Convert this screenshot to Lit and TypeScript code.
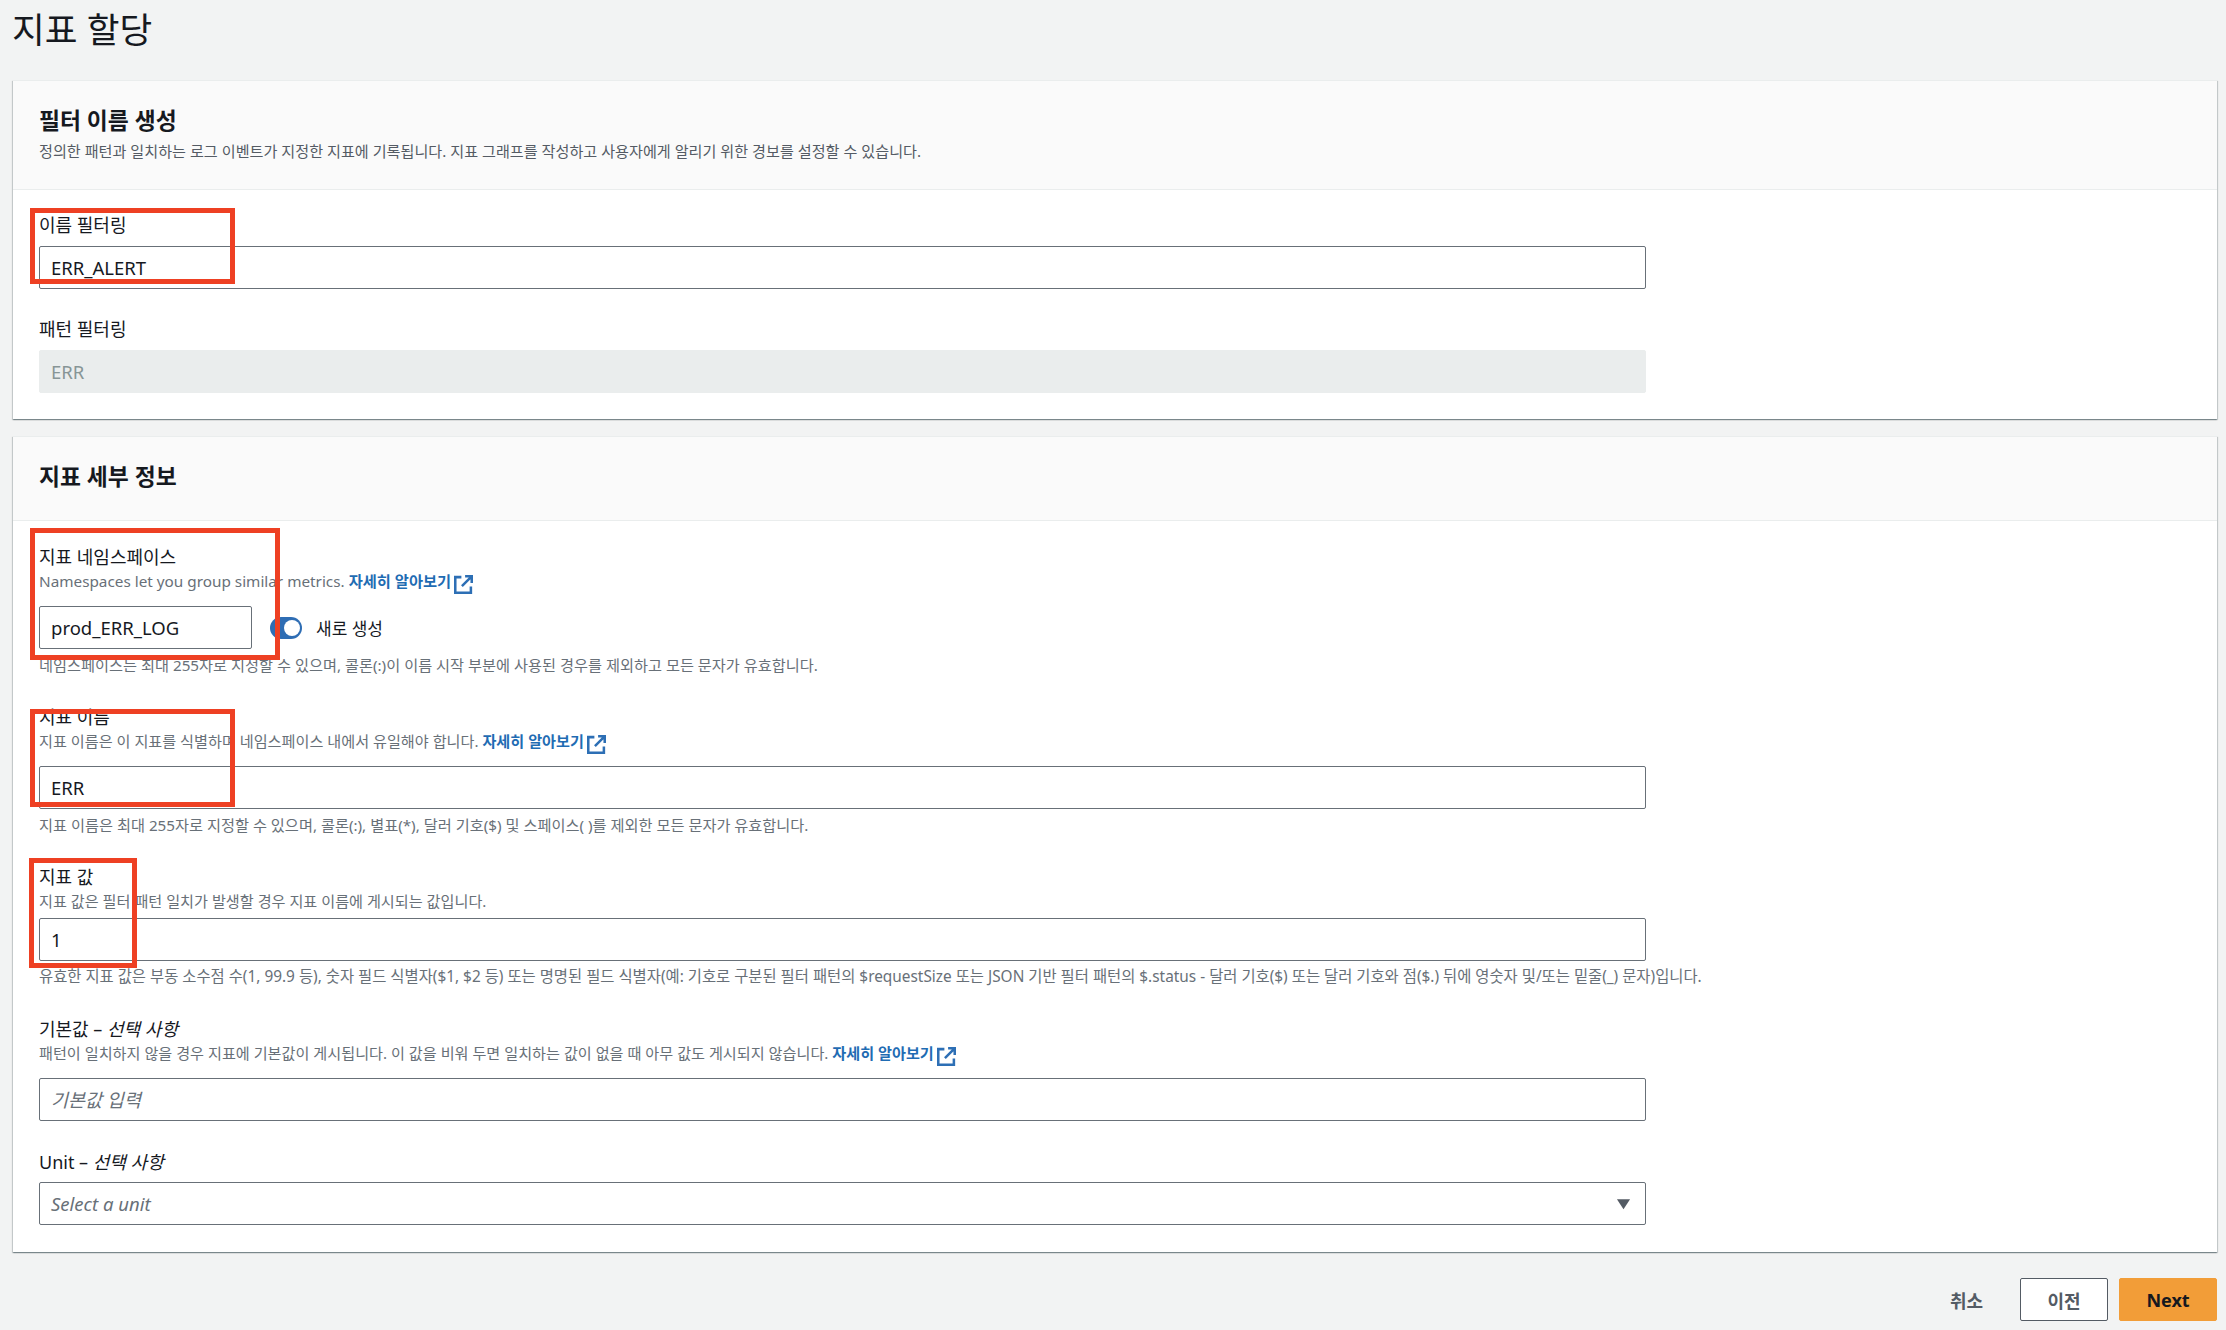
import { LitElement, html, css, nothing } from "lit";
import { customElement } from "lit/decorators.js";

const LEARN_MORE = "자세히 알아보기";

const externalIcon = html`<svg class="ext" viewBox="0 0 18 18" fill="none" stroke="currentColor" stroke-width="2.4">
  <path d="M7 2H1.2v14.8H16V11" />
  <path d="M10.5 1.2h6.3v6.3M16.5 1.5L7.5 10.5" />
</svg>`;

@customElement("app-root")
export class AppRoot extends LitElement {
  static styles = css`
    :host {
      display: block;
      position: relative;
      min-height: 1330px;
      box-sizing: border-box;
      padding: 7px 9px 0 13px;
      background: #f2f3f3;
      color: #16191f;
      font-family: "Noto Sans", "Noto Sans CJK KR", sans-serif;
      font-size: 16px;
      overflow: hidden;
    }
    h1 {
      margin: 0 0 29px -1px;
      font-size: 35.6px;
      line-height: 44px;
      font-weight: 400;
    }
    .card {
      background: #fff;
      border-top: 1px solid #eaeded;
      box-shadow: 0 1px 1px 0 rgba(0, 28, 36, 0.3), 1px 1px 1px 0 rgba(0, 28, 36, 0.15),
        -1px 1px 1px 0 rgba(0, 28, 36, 0.15);
      margin-bottom: 17px;
    }
    .card-head {
      background: #fafafa;
      border-bottom: 1px solid #eaeded;
      padding: 24px 26px 27px;
    }
    .card-head h2 {
      margin: 0;
      font-size: 22.8px;
      line-height: 32px;
      font-weight: 700;
    }
    .card-head p {
      margin: 3px 0 0;
      color: #545b64;
      font-size: 15.13px;
      line-height: 22px;
    }
    .card-body {
      display: flex;
      flex-direction: column;
      gap: 29px;
      padding: 24px 26px 27px;
    }
    .card-body.tight {
      gap: 28px;
      padding: 23px 26px 26px;
    }
    .field label {
      display: block;
      font-size: 18px;
      line-height: 24px;
    }
    .field.plain label {
      margin-bottom: 9px;
    }
    .field.last label {
      margin-bottom: 8px;
    }
    .desc {
      margin: 1px 0 6px;
      color: #687078;
      font-size: 15.15px;
      line-height: 22px;
    }
    .desc.linked {
      margin-bottom: 12px;
    }
    .desc.latin {
      font-size: 15.3px;
    }
    .desc a {
      color: #1f6cb3;
      font-weight: 700;
      text-decoration: none;
    }
    .ext {
      display: inline-block;
      width: 19px;
      height: 19px;
      margin-left: 3px;
      vertical-align: -7px;
      color: #2d6fb5;
    }
    .hint {
      margin-top: 5px;
      color: #687078;
      font-size: 15.22px;
      line-height: 22px;
      white-space: nowrap;
    }
    .hint.long {
      font-size: 15.38px;
    }
    .control {
      display: block;
      box-sizing: border-box;
      width: 1607px;
      height: 43px;
      padding: 0 11px;
      border: 1px solid #687078;
      border-radius: 2px;
      background: #fff;
      color: #16191f;
      font: inherit;
      font-size: 18.5px;
      outline: none;
    }
    .control:disabled {
      border-color: #eaeded;
      background: #eaeded;
      color: #879596;
    }
    .control::placeholder {
      color: #687078;
      font-style: italic;
      opacity: 1;
    }
    .row {
      display: flex;
      align-items: center;
    }
    .row .control {
      width: 213px;
    }
    .toggle {
      position: relative;
      width: 32px;
      height: 22px;
      margin-left: 18px;
      border-radius: 11px;
      background: #2e6db4;
    }
    .toggle::after {
      content: "";
      position: absolute;
      top: 3px;
      right: 2px;
      width: 16px;
      height: 16px;
      border-radius: 50%;
      background: #fff;
    }
    .toggle-label {
      margin-left: 14px;
      font-size: 17px;
    }
    .select {
      display: flex;
      align-items: center;
      justify-content: space-between;
      color: #687078;
      font-style: italic;
    }
    .select svg {
      width: 15px;
      height: 12px;
      margin-right: 3px;
      fill: #545b64;
    }
    .footer {
      display: flex;
      align-items: center;
      justify-content: flex-end;
      margin-top: 26px;
    }
    .btn {
      box-sizing: border-box;
      height: 43px;
      border-radius: 2px;
      font-family: inherit;
      font-size: 18px;
      font-weight: 700;
      background: none;
      border: 1px solid transparent;
      color: #545b64;
    }
    .btn.cancel {
      width: 32px;
      padding: 0;
      margin-right: 39px;
      white-space: nowrap;
    }
    .btn.prev {
      width: 88px;
      margin-right: 11px;
      border-color: #545b64;
      background: #fff;
    }
    .btn.next {
      width: 98px;
      background: #f29d38;
      border-color: #f29d38;
      color: #16191f;
    }
    .mark {
      position: absolute;
      box-sizing: border-box;
      border: 5px solid #ee4023;
      pointer-events: none;
    }
  `;

  // red annotation boxes drawn over the screenshot: x, y, width, height
  private marks = [
    [30, 208, 205, 76],
    [30, 528, 250, 132],
    [30, 709, 205, 98],
    [29, 858, 108, 110],
  ];

  private desc(text: string, linked = false, extra = "") {
    return html`<div class="desc ${linked ? "linked" : ""} ${extra}">
      ${text}${linked ? html` <a href="#">${LEARN_MORE}</a>${externalIcon}` : nothing}
    </div>`;
  }

  render() {
    return html`
      <h1>지표 할당</h1>

      <section class="card">
        <div class="card-head">
          <h2>필터 이름 생성</h2>
          <p>정의한 패턴과 일치하는 로그 이벤트가 지정한 지표에 기록됩니다. 지표 그래프를 작성하고 사용자에게 알리기 위한 경보를 설정할 수 있습니다.</p>
        </div>
        <div class="card-body tight">
          <div class="field plain">
            <label>이름 필터링</label>
            <input class="control" .value=${"ERR_ALERT"} />
          </div>
          <div class="field plain">
            <label>패턴 필터링</label>
            <input class="control" disabled .value=${"ERR"} />
          </div>
        </div>
      </section>

      <section class="card">
        <div class="card-head"><h2>지표 세부 정보</h2></div>
        <div class="card-body">
          <div class="field">
            <label>지표 네임스페이스</label>
            ${this.desc("Namespaces let you group similar metrics.", true, "latin")}
            <div class="row">
              <input class="control" .value=${"prod_ERR_LOG"} />
              <div class="toggle"></div>
              <span class="toggle-label">새로 생성</span>
            </div>
            <div class="hint">네임스페이스는 최대 255자로 지정할 수 있으며, 콜론(:)이 이름 시작 부분에 사용된 경우를 제외하고 모든 문자가 유효합니다.</div>
          </div>
          <div class="field">
            <label>지표 이름</label>
            ${this.desc("지표 이름은 이 지표를 식별하며 네임스페이스 내에서 유일해야 합니다.", true)}
            <input class="control" .value=${"ERR"} />
            <div class="hint">지표 이름은 최대 255자로 지정할 수 있으며, 콜론(:), 별표(*), 달러 기호($) 및 스페이스( )를 제외한 모든 문자가 유효합니다.</div>
          </div>
          <div class="field">
            <label>지표 값</label>
            ${this.desc("지표 값은 필터 패턴 일치가 발생할 경우 지표 이름에 게시되는 값입니다.")}
            <input class="control" .value=${"1"} />
            <div class="hint long">유효한 지표 값은 부동 소수점 수(1, 99.9 등), 숫자 필드 식별자($1, $2 등) 또는 명명된 필드 식별자(예: 기호로 구분된 필터 패턴의 $requestSize 또는 JSON 기반 필터 패턴의 $.status - 달러 기호($) 또는 달러 기호와 점($.) 뒤에 영숫자 및/또는 밑줄(_) 문자)입니다.</div>
          </div>
          <div class="field">
            <label>기본값 – <i>선택 사항</i></label>
            ${this.desc("패턴이 일치하지 않을 경우 지표에 기본값이 게시됩니다. 이 값을 비워 두면 일치하는 값이 없을 때 아무 값도 게시되지 않습니다.", true)}
            <input class="control" placeholder="기본값 입력" />
          </div>
          <div class="field plain last">
            <label>Unit – <i>선택 사항</i></label>
            <div class="control select">
              <span>Select a unit</span>
              <svg viewBox="0 0 16 12"><path d="M1 1h14L8 11.5z" /></svg>
            </div>
          </div>
        </div>
      </section>

      <div class="footer">
        <button class="btn cancel">취소</button>
        <button class="btn prev">이전</button>
        <button class="btn next">Next</button>
      </div>

      ${this.marks.map(
        ([x, y, w, h]) =>
          html`<div class="mark" style="left:${x}px;top:${y}px;width:${w}px;height:${h}px"></div>`
      )}
    `;
  }
}
